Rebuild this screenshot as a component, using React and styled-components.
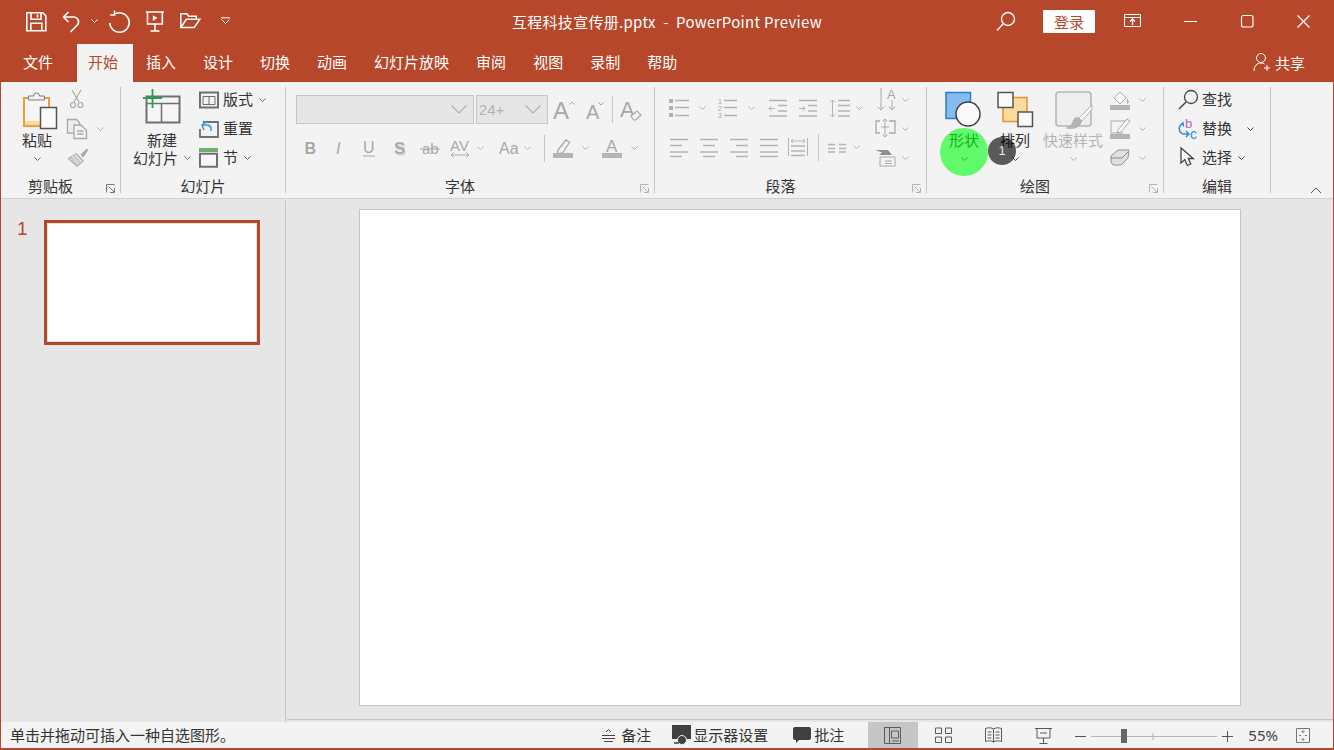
import React from "react";
import styled, { createGlobalStyle } from "styled-components";

const RED = "#b7472a";
const GRAY = "#a9a9a9";
const DARK = "#6b6b6b";
const SANS = `"Liberation Sans", Arial, sans-serif`;
const CJK = `"Noto Sans CJK SC", "Liberation Sans", sans-serif`;

const Global = createGlobalStyle`
  html, body { margin: 0; padding: 0; background: #e6e6e6; }
  body { font-family: ${CJK}; font-size: 15px; overflow: hidden; }
  * { box-sizing: border-box; }
`;

const Window = styled.div`
  width: 1334px; height: 750px; display: flex; flex-direction: column;
  border-left: 1px solid ${RED}; border-right: 1px solid ${RED}; border-bottom: 2px solid ${RED};
  overflow: hidden;
`;
const TitleBar = styled.header`
  height: 42px; flex: none; background: ${RED}; display: grid; grid-template-columns: 1fr auto 1fr; align-items: center; color: #fff;
`;
const TitleLeft = styled.div`display: flex; align-items: center;`;
const TitleRight = styled.div`display: flex; align-items: center; justify-content: flex-end;`;
const TitleText = styled.div`font-size: 15px; line-height: 20px; white-space: pre; color: #fff; letter-spacing: .3px; padding-top: 2px;`;
const Login = styled.button`
  width: 52px; height: 23px; margin-left: 27px; border: 0; padding: 0; background: #fff; color: ${RED};
  font: 15px/23px ${CJK}; border-radius: 1px;
`;
const TabBar = styled.nav`height: 40px; flex: none; background: ${RED}; display: flex; align-items: flex-end;`;
const Tab = styled.div`
  height: 38px; line-height: 35px; white-space: nowrap; font-size: 15px;
  padding: ${(p) => p.$pad || "0 13.5px"};
  background: ${(p) => (p.$active ? "#f3f3f3" : "transparent")};
  color: ${(p) => (p.$active ? RED : "#fff")};
`;
const Share = styled.div`margin-left: auto; margin-right: 28px; display: flex; align-items: center; gap: 4px; height: 38px; padding-bottom: 2px; color: #fff;`;

const Ribbon = styled.section`
  height: 117px; flex: none; background: #f3f3f3; border-bottom: 1px solid #d2d2d2; display: flex; position: relative;
`;
const Group = styled.div`
  width: ${(p) => p.$w}px; flex: none; display: flex; flex-direction: column; position: relative; padding-top: 3px;
`;
const GroupBody = styled.div`height: 91px; display: flex; align-items: flex-start;`;
const GroupFooter = styled.div`height: 20px; display: flex; align-items: center;`;
const GroupLabel = styled.div`flex: 1; text-align: center; font-size: 15px; line-height: 20px; color: #333;`;
const Launcher = styled.div`width: 20px; display: flex; justify-content: center; align-items: center; padding-top: 4px;`;
const Divider = styled.div`width: 1px; height: 106px; margin-top: 5px; background: #c6c6c6; flex: none;`;
const Collapse = styled.div`position: absolute; right: 11px; bottom: 4px; line-height: 0;`;

const Cell = styled.span`display: flex; flex: none; align-items: center; margin-left: ${(p) => p.$l || 0}px;`;
const TextCell = styled(Cell)`padding-bottom: 2px;`;
const Large = styled.div`
  width: ${(p) => p.$w}px; margin-left: ${(p) => p.$l}px; flex: none; display: flex; flex-direction: column; align-items: center;
  color: ${(p) => (p.$off ? "#b4b4b4" : "#333")};
`;
const TextLine = styled.div`height: 18px; line-height: 18px; font-size: 15px; display: flex; align-items: center; white-space: nowrap; gap: 6px; padding-bottom: 2px;`;
const ChevLine = styled.div`height: 18px; display: flex; align-items: center;`;
const SmallCol = styled.div`display: flex; flex-direction: column; margin-left: ${(p) => p.$l}px; flex: none;`;
const SmallRow = styled.div`height: 29px; display: flex; align-items: center; font-size: 15px; color: #333; white-space: nowrap;`;
const Stack = styled.div`display: flex; flex-direction: column; flex: none; width: ${(p) => p.$w}px; padding-top: ${(p) => p.$top}px; gap: ${(p) => p.$gap}px;`;
const ToolRow = styled.div`display: flex; align-items: center; height: ${(p) => p.$h}px;`;
const Combo = styled.div`
  width: ${(p) => p.$w}px; height: 29px; margin-left: ${(p) => p.$l}px; flex: none; background: #e6e6e6; border: 1px solid #c6c6c6;
  display: flex; align-items: center; justify-content: space-between; padding: 0 6px 0 2px; color: #b4b4b4; font: 15px/27px ${SANS};
`;
const Sep = styled.div`width: 1px; height: ${(p) => p.$h}px; margin-left: ${(p) => p.$l}px; background: #c6c6c6; flex: none;`;
const Spot = styled.div`
  position: absolute; left: 13px; top: 46px; width: 48px; height: 48px; border-radius: 50%;
  background: rgba(0, 255, 15, .6);
`;
const Badge = styled.div`
  position: absolute; left: 61px; top: 55px; width: 28px; height: 28px; border-radius: 50%;
  background: rgba(0, 0, 0, .63); color: #e8e8e8; font: 13px/28px ${SANS}; text-align: center;
`;

const Main = styled.main`flex: 1; min-height: 0; display: flex; background: #e6e6e6;`;
const ThumbPane = styled.aside`width: 284px; flex: none; display: flex; align-items: flex-start; padding: 21px 0 0 16px; gap: 18px;`;
const ThumbNum = styled.div`font: 19px/18px ${SANS}; color: ${RED}; width: 9px;`;
const Thumb = styled.div`width: 216px; height: 125px; background: #fff; border: 3px solid ${RED}; box-shadow: inset 0 0 0 1px #e2e2e2;`;
const PaneDivider = styled.div`width: 1px; flex: none; margin-top: 2px; background: #c6c6c6;`;
const EditorCol = styled.div`flex: 1; min-width: 0; display: flex; flex-direction: column;`;
const Editor = styled.div`flex: 1; padding: 10px 0 0 73px;`;
const Slide = styled.div`width: 882px; height: 497px; background: #fff; border: 1px solid #c6c6c6;`;
const HScroll = styled.div`height: 1px; margin-bottom: 2px; margin-left: 1px; background: #c6c6c6;`;

const StatusBar = styled.footer`
  height: 26px; flex: none; background: #f3f3f3; display: flex; align-items: center; font-size: 15px; color: #333; white-space: nowrap;
`;
const StatusMsg = styled.div`padding: 0 0 2px 9px; flex: 1;`;
const StatusItem = styled.div`display: flex; align-items: center; margin-left: ${(p) => p.$l}px; flex: none;`;
const ViewBtn = styled.div`
  width: 50px; height: 26px; flex: none; display: flex; align-items: center; justify-content: center;
  background: ${(p) => (p.$active ? "#c6c6c6" : "transparent")};
`;
const Zoom = styled.div`font: 15px/26px "Noto Sans", ${SANS}; margin-left: ${(p) => p.$l}px; color: #444;`;

const Svg = styled.svg`display: block; flex: none; overflow: visible;`;
const Ico = ({ x, y, w, h, children }) => (
  <Svg width={w} height={h} viewBox={`${x} ${y} ${w} ${h}`} fill="none" strokeWidth="1">
    {children}
  </Svg>
);
const Letter = styled.text`font-family: ${SANS}; fill: ${(p) => p.$c || GRAY}; font-weight: ${(p) => p.$b || 400}; font-style: ${(p) => p.$i || "normal"};`;
const Chev = ({ c = "#8a8a8a" }) => (
  <Svg width="7" height="4" viewBox="0 0 7 4" fill="none"><path d="M.5.5l3 3 3-3" stroke={c} /></Svg>
);
const DimChev = () => <Chev c="#b0b0b0" />;
const LauncherIcon = ({ c = "#b4b4b4" }) => (
  <Svg width="9" height="9" viewBox="0 0 9 9" fill="none" stroke={c}>
    <path d="M.5 8.5V.5h8M2.5 2.5l5.5 5.5M8.5 4v4.5H4" />
  </Svg>
);

/* title bar icons */
const QuickAccess = () => (
  <>
    <Cell $l={25}>
      <Ico x={26} y={10} w={21} h={22}>
        <g stroke="#fff" strokeWidth="1.6">
          <path d="M26.8 12.8h16l3 3v15h-19zM31 12.8v6.5h10v-6.5M30.800 30.800v-7.5h11v7.500" />
          <path d="M37.500 14.500v3" />
        </g>
      </Ico>
    </Cell>
    <Cell $l={15}>
      <Ico x={61} y={10} w={20} h={23}>
        <path d="M67.500 12l-5 5 5 5M63 17h9.500a4.800 4.800 0 0 1 4.200 7.500L69.500 32" stroke="#fff" strokeWidth="1.7" />
      </Ico>
    </Cell>
    <Cell $l={9}><Chev c="#fff" /></Cell>
    <Cell $l={10}>
      <Ico x={107} y={9} w={22} h={23}>
        <path d="M113 13.500a9.700 9.700 0 1 1-4.200 8.500M113.500 9.500v4.500H109" stroke="#fff" strokeWidth="1.6" />
      </Ico>
    </Cell>
    <Cell $l={14}>
      <Ico x={143} y={10} w={21} h={22}>
        <path d="M144.800 12h18M146.500 12v12h14.800V12M154 24v7M149.500 31h9" stroke="#fff" strokeWidth="1.6" />
        <path d="M151.800 15.300l4.600 2.800-4.600 2.800z" fill="#fff" />
      </Ico>
    </Cell>
    <Cell $l={14}>
      <Ico x={178} y={12} w={22} h={18}>
        <path d="M179.800 27.500V13.800h6l2 2.500h7.500v3M179.800 27.500h13.500l5.500-8.200h-13.500z" stroke="#fff" strokeWidth="1.500" />
      </Ico>
    </Cell>
    <Cell $l={19}>
      <Ico x={219} y={17} w={11} h={10}>
        <path d="M220 18.800h9M220.500 20.500l4 4 4-4" stroke="#fff" />
      </Ico>
    </Cell>
  </>
);

const GroupClipboard = () => (
  <Group $w={119}>
    <GroupBody>
      <Large $w={40} $l={16}>
        <Ico x={17} y={85} w={40} h={47}>
          <path d="M24 98h25v28H24z" fill="#fff" stroke="#eb9f3c" strokeWidth="2" />
          <path d="M26 100h21v21H26z" fill="#f6f6f6" />
          <path d="M25 121h17v4H25z" fill="#fbd99b" />
          <path d="M28.500 100v-4h5a3 3 0 0 1 6 0h5v4z" fill="#f3f3f3" stroke="#7a7a7a" />
          <path d="M40.500 107.500h16v21h-16z" fill="#fafafa" stroke="#555" strokeWidth="1.500" />
        </Ico>
        <TextLine>粘贴</TextLine>
        <ChevLine><Chev c="#666" /></ChevLine>
      </Large>
      <SmallCol $l={9}>
        <SmallRow>
          <Ico x={66} y={89} w={22} h={21}>
            <g stroke={GRAY} strokeWidth="1.200">
              <path d="M72 90l7 12M81 90l-7 12" />
              <circle cx="73" cy="105" r="2.500" /><circle cx="80.500" cy="105" r="2.500" />
            </g>
          </Ico>
        </SmallRow>
        <SmallRow>
          <Ico x={66} y={117} w={22} h={22}>
            <g stroke={GRAY} strokeWidth="1.300">
              <path d="M67.500 118.500h9l3 3v4h-3v6.500h-9z" fill="#ededed" />
              <path d="M74 124h7l5.500 5.500v8H74z" fill="#f3f3f3" />
              <path d="M77 130h6.500M77 133h6.500" />
            </g>
          </Ico>
          <Cell $l={9}><DimChev /></Cell>
        </SmallRow>
        <SmallRow>
          <Ico x={66} y={146} w={22} h={21}>
            <path d="M87 148l-6 5.500 2 2.500 4.500-6.500z" fill={GRAY} stroke={GRAY} />
            <path d="M68 157.500l8.500-5 7 7.500-6.500 5.500z" fill="#c9c9c9" stroke={GRAY} />
            <path d="M72 155l6.500 8M75 153.500l6.500 7.500" stroke="#f3f3f3" />
          </Ico>
        </SmallRow>
      </SmallCol>
    </GroupBody>
    <GroupFooter><GroupLabel>剪贴板</GroupLabel><Launcher><LauncherIcon c="#777" /></Launcher></GroupFooter>
  </Group>
);

const GroupSlides = () => (
  <Group $w={164}>
    <GroupBody>
      <Large $w={64} $l={9}>
        <Ico x={130} y={85} w={64} h={47}>
          <path d="M146.500 96.500h33v26h-33z" fill="#f6f6f6" stroke="#707070" strokeWidth="2" />
          <path d="M147 103.500h32M161.500 103.500v19" stroke="#707070" strokeWidth="1.500" />
          <path d="M143 98h19M152.500 89v19" stroke="#22a04f" strokeWidth="1.800" />
        </Ico>
        <TextLine>新建</TextLine>
        <TextLine>幻灯片<Chev c="#666" /></TextLine>
      </Large>
      <SmallCol $l={5}>
        <SmallRow>
          <Ico x={199} y={90} w={20} h={18}>
            <path d="M200 91.500h18v15h-18z" stroke="#707070" strokeWidth="2" />
            <path d="M203 95.500h12M203 95.500v8h12v-8M209 96v7" stroke="#707070" />
          </Ico>
          <TextCell $l={4}>版式</TextCell><Cell $l={6}><Chev c="#666" /></Cell>
        </SmallRow>
        <SmallRow>
          <Ico x={199} y={118} w={20} h={18}>
            <path d="M203 120h15v15h-18v-8" stroke="#707070" strokeWidth="1.800" />
            <path d="M208 119l-6 4 2 5M203 123h5a3.500 3.500 0 0 1 3 3v3" stroke="#2e9be0" strokeWidth="1.500" />
          </Ico>
          <TextCell $l={4}>重置</TextCell>
        </SmallRow>
        <SmallRow>
          <Ico x={199} y={147} w={20} h={20}>
            <path d="M199 147h19v4h-19z" fill="#70ad6f" />
            <path d="M200 152.800h17v13h-17z" fill="#f6f6f6" stroke="#707070" strokeWidth="2" />
          </Ico>
          <TextCell $l={4}>节</TextCell><Cell $l={6}><Chev c="#666" /></Cell>
        </SmallRow>
      </SmallCol>
    </GroupBody>
    <GroupFooter><GroupLabel>幻灯片</GroupLabel></GroupFooter>
  </Group>
);

const BigChev = () => (
  <Svg width="16" height="9" viewBox="0 0 16 9" fill="none"><path d="M.5.500l7.500 7.500L15.500.500" stroke="#b0b0b0" strokeWidth="1.200" /></Svg>
);

const GroupFont = () => (
  <Group $w={368}>
    <GroupBody>
      <Stack $w={368} $top={10} $gap={13}>
        <ToolRow $h={29}>
          <Combo $w={178} $l={10}><span /><BigChev /></Combo>
          <Combo $w={72} $l={2}><span>24+</span><BigChev /></Combo>
          <Cell $l={6}>
            <Ico x={554} y={96} w={22} h={24}>
              <Letter x="553" y="117" fontSize="24">A</Letter>
              <path d="M569.500 102.500l2.500-2.500 2.500 2.500" stroke={GRAY} />
            </Ico>
          </Cell>
          <Cell $l={10}>
            <Ico x={586} y={96} w={20} h={24}>
              <Letter x="586" y="117" fontSize="20">A</Letter>
              <path d="M598.500 100.500l2.500 2.500 2.500-2.500" stroke={GRAY} />
            </Ico>
          </Cell>
          <Sep $l={6} $h={27} />
          <Cell $l={8}>
            <Ico x={621} y={96} w={22} h={24}>
              <Letter x="620" y="115" fontSize="22">A</Letter>
              <path d="M631 114l6-5 4 4-5.500 5h-2z" fill="#f3f3f3" stroke={GRAY} strokeWidth="1.200" />
            </Ico>
          </Cell>
        </ToolRow>
        <ToolRow $h={22}>
          <Cell $l={19}><Ico x={305} y={137} w={11} h={22}><Letter x="304.500" y="154" fontSize="16" $b={700}>B</Letter></Ico></Cell>
          <Cell $l={19}><Ico x={335} y={137} w={10} h={22}><Letter x="336" y="154" fontSize="16" $i="italic">I</Letter></Ico></Cell>
          <Cell $l={18}><Ico x={363} y={137} w={12} h={22}><Letter x="363" y="153" fontSize="16">U</Letter><path d="M363 156h12" stroke={GRAY} /></Ico></Cell>
          <Cell $l={19}>
            <Ico x={394} y={137} w={11} h={22}>
              <Letter x="395" y="155.500" fontSize="17" $b={700} $c="#dcdcdc">S</Letter>
              <Letter x="394" y="154" fontSize="17" $b={700}>S</Letter>
            </Ico>
          </Cell>
          <Cell $l={15}><Ico x={420} y={137} w={21} h={22}><Letter x="422" y="154" fontSize="15">ab</Letter><path d="M420 149h20" stroke={GRAY} /></Ico></Cell>
          <Cell $l={9}>
            <Ico x={450} y={137} w={21} h={22}>
              <Letter x="450" y="151" fontSize="15">AV</Letter>
              <path d="M451 155h18M453.500 152.500l-2.500 2.500 2.500 2.500M466.500 152.500l2.500 2.500-2.500 2.500" stroke={GRAY} />
            </Ico>
          </Cell>
          <Cell $l={6}><DimChev /></Cell>
          <Cell $l={15}><Ico x={499} y={137} w={21} h={22}><Letter x="499" y="154" fontSize="16">Aa</Letter></Ico></Cell>
          <Cell $l={4}><DimChev /></Cell>
          <Sep $l={13} $h={27} />
          <Cell $l={8}>
            <Ico x={553} y={137} w={20} h={22}>
              <path d="M558 150l8-10 3.500 2.500-7 10.500-5 1z" stroke={GRAY} strokeWidth="1.300" />
              <path d="M553 153h20v5h-20z" fill="#b4b4b4" />
            </Ico>
          </Cell>
          <Cell $l={9}><DimChev /></Cell>
          <Cell $l={13}>
            <Ico x={602} y={137} w={20} h={22}>
              <Letter x="606" y="152" fontSize="17">A</Letter>
              <path d="M602 153h20v5h-20z" fill="#b4b4b4" />
            </Ico>
          </Cell>
          <Cell $l={9}><DimChev /></Cell>
        </ToolRow>
      </Stack>
    </GroupBody>
    <GroupFooter><GroupLabel>字体</GroupLabel><Launcher><LauncherIcon /></Launcher></GroupFooter>
  </Group>
);

const Lines = ({ x, w, ys }) => <path d={ys.map((y) => `M${x} ${y}h${w}`).join("")} stroke="#b4b4b4" strokeWidth="1.500" />;

const GroupPara = () => (
  <Group $w={271}>
    <GroupBody>
      <Stack $w={220} $top={13} $gap={19}>
        <ToolRow $h={20}>
          <Cell $l={14}>
            <Ico x={669} y={98} w={20} h={20}>
              <path d="M669 99h4v4h-4zM669 106h4v4h-4zM669 113h4v4h-4z" fill="#b0b0b0" />
              <Lines x={675} w={14} ys={[100.500, 107.500, 115.500]} />
            </Ico>
          </Cell>
          <Cell $l={10}><DimChev /></Cell>
          <Cell $l={11}>
            <Ico x={717} y={98} w={20} h={20}>
              <Letter x="718" y="104" fontSize="7">1</Letter><Letter x="718" y="111" fontSize="7">2</Letter><Letter x="718" y="118" fontSize="7">3</Letter>
              <Lines x={724} w={13} ys={[100.500, 107.500, 115.500]} />
            </Ico>
          </Cell>
          <Cell $l={11}><DimChev /></Cell>
          <Cell $l={13}>
            <Ico x={768} y={98} w={19} h={20}>
              <Lines x={769} w={18} ys={[100.500, 116]} /><Lines x={778} w={9} ys={[105.500, 111]} />
              <path d="M775 108.500h-6M771.500 106l-2.500 2.500 2.500 2.500" stroke="#b4b4b4" />
            </Ico>
          </Cell>
          <Cell $l={11}>
            <Ico x={798} y={98} w={19} h={20}>
              <Lines x={799} w={18} ys={[100.500, 116]} /><Lines x={808} w={9} ys={[105.500, 111]} />
              <path d="M799 108.500h6M802.500 106l2.500 2.500-2.500 2.500" stroke="#b4b4b4" />
            </Ico>
          </Cell>
          <Cell $l={12}>
            <Ico x={829} y={98} w={21} h={20}>
              <Lines x={838} w={12} ys={[100.500, 105.500, 111, 116]} />
              <path d="M832.500 100v17M830 102.500l2.500-2.500 2.500 2.500M830 114.500l2.500 2.500 2.500-2.500" stroke="#b4b4b4" />
            </Ico>
          </Cell>
          <Cell $l={6}><DimChev /></Cell>
        </ToolRow>
        <ToolRow $h={20}>
          <Cell $l={15}><Ico x={670} y={137} w={18} h={20}><Lines x={670} w={18} ys={[139.500, 152]} /><Lines x={670} w={12} ys={[145.500, 156.500]} /></Ico></Cell>
          <Cell $l={12}><Ico x={700} y={137} w={18} h={20}><Lines x={700} w={18} ys={[139.500, 152]} /><Lines x={703} w={12} ys={[145.500, 156.500]} /></Ico></Cell>
          <Cell $l={12}><Ico x={730} y={137} w={18} h={20}><Lines x={730} w={18} ys={[139.500, 152]} /><Lines x={736} w={12} ys={[145.500, 156.500]} /></Ico></Cell>
          <Cell $l={12}><Ico x={760} y={137} w={18} h={20}><Lines x={760} w={18} ys={[139.500, 145.500, 152, 156.500]} /></Ico></Cell>
          <Cell $l={10}>
            <Ico x={788} y={137} w={20} h={20}>
              <path d="M788.500 138v18M807.500 138v18M791 141h14M793 139l-2 2 2 2M803 139l2 2-2 2" stroke="#b4b4b4" />
              <Lines x={791} w={14} ys={[146, 151, 155.500]} />
            </Ico>
          </Cell>
          <Sep $l={10} $h={27} />
          <Cell $l={9}><Ico x={828} y={137} w={18} h={20}><Lines x={828} w={7} ys={[144.500, 148.500, 152]} /><Lines x={839} w={7} ys={[144.500, 148.500, 152]} /></Ico></Cell>
          <Cell $l={7}><DimChev /></Cell>
        </ToolRow>
      </Stack>
      <SmallCol $l={0}>
        <SmallRow>
          <Ico x={875} y={87} w={24} h={24}>
            <Letter x="887" y="98" fontSize="13">A</Letter>
            <path d="M881 87v22M877.500 105.500l3.500 3.500 3.500-3.500M892 99v10M889 105.500l3 3.500 3-3.500" stroke={GRAY} />
          </Ico>
          <Cell $l={3}><DimChev /></Cell>
        </SmallRow>
        <SmallRow>
          <Ico x={875} y={117} w={22} h={22}>
            <path d="M880 120h-4v12h4M889 120h6v12h-6" stroke={GRAY} strokeWidth="1.300" />
            <path d="M885 118v18M882.500 120.500l2.500-2.500 2.500 2.500M882.500 133.500l2.500 2.500 2.500-2.500M881 126h8" stroke={GRAY} />
          </Ico>
          <Cell $l={5}><DimChev /></Cell>
        </SmallRow>
        <SmallRow>
          <Ico x={875} y={147} w={22} h={20}>
            <path d="M875 149h13l4 5h-13l3-2.500z" fill="#8f8f8f" />
            <path d="M880 156h15v9h-15z" fill="#f3f3f3" stroke={GRAY} />
            <path d="M885 160h7M885 162.500h7" stroke={GRAY} />
          </Ico>
          <Cell $l={5}><DimChev /></Cell>
        </SmallRow>
      </SmallCol>
    </GroupBody>
    <GroupFooter><GroupLabel>段落</GroupLabel><Launcher><LauncherIcon /></Launcher></GroupFooter>
  </Group>
);

const GroupDraw = () => (
  <Group $w={236}>
    <GroupBody>
      <Large $w={40} $l={17}>
        <Ico x={944} y={85} w={40} h={47}>
          <path d="M946 92.500h24.500v26H946z" fill="#84bcee" stroke="#2b7cd3" strokeWidth="1.500" />
          <circle cx="968" cy="114" r="12" fill="#fafafa" stroke="#404040" strokeWidth="1.500" />
        </Ico>
        <TextLine>形状</TextLine>
        <ChevLine><Chev c="#444" /></ChevLine>
      </Large>
      <Large $w={40} $l={11}>
        <Ico x={995} y={85} w={40} h={47}>
          <path d="M1003 97.500h24v24h-24z" fill="#fbdc9c" stroke="#e88f2e" strokeWidth="1.500" />
          <path d="M998 92.500h15v15h-15z" fill="#fafafa" stroke="#555" strokeWidth="1.500" />
          <path d="M1018 112h14.500v14.500H1018z" fill="#fafafa" stroke="#555" strokeWidth="1.500" />
        </Ico>
        <TextLine>排列</TextLine>
        <ChevLine><Chev c="#444" /></ChevLine>
      </Large>
      <Large $w={64} $l={6} $off>
        <Ico x={1041} y={85} w={64} h={47}>
          <rect x="1056" y="92" width="35" height="34" rx="3" fill="#eeeeee" stroke="#b4b4b4" strokeWidth="1.500" />
          <path d="M1092 105l-13 13 3 3 10-12z" fill="#fafafa" stroke="#b4b4b4" />
          <path d="M1078 117c-4 0-5 3-6 6-1 3-4 4-7 5 7 2 15 1 17-7z" fill="#b4b4b4" />
        </Ico>
        <TextLine>快速样式</TextLine>
        <ChevLine><DimChev /></ChevLine>
      </Large>
      <SmallCol $l={5}>
        <SmallRow>
          <Ico x={1110} y={88} w={20} h={22}>
            <path d="M1114 97l6-6 6 6-6 6z" fill="#fafafa" stroke={GRAY} />
            <path d="M1127 97l2 4-2 2z" fill={GRAY} />
            <path d="M1110 104h20v5h-20z" fill="#b4b4b4" />
          </Ico>
          <Cell $l={9}><DimChev /></Cell>
        </SmallRow>
        <SmallRow>
          <Ico x={1110} y={117} w={20} h={22}>
            <path d="M1127 120h-16v12h12" stroke={GRAY} />
            <path d="M1118 129l9-11 3 2-9 11-4 1z" fill="#fafafa" stroke={GRAY} />
            <path d="M1110 133h20v5h-20z" fill="#b4b4b4" />
          </Ico>
          <Cell $l={9}><DimChev /></Cell>
        </SmallRow>
        <SmallRow>
          <Ico x={1110} y={148} w={20} h={18}>
            <path d="M1111 155l7-6h11l-1 8-7 7h-8l-2-3z" fill="#d8d8d8" stroke={DARK} opacity=".7" />
            <path d="M1111 157h11l6-6" stroke={DARK} opacity=".7" />
          </Ico>
          <Cell $l={9}><DimChev /></Cell>
        </SmallRow>
      </SmallCol>
    </GroupBody>
    <GroupFooter><GroupLabel>绘图</GroupLabel><Launcher><LauncherIcon /></Launcher></GroupFooter>
    <Spot />
    <Badge>1</Badge>
  </Group>
);

const GroupEdit = () => (
  <Group $w={106}>
    <GroupBody>
      <SmallCol $l={14}>
        <SmallRow>
          <Ico x={1178} y={88} w={20} h={22}>
            <circle cx="1191" cy="96" r="6.500" stroke="#444" strokeWidth="1.300" />
            <path d="M1186 101l-7 7" stroke="#444" strokeWidth="1.500" />
          </Ico>
          <TextCell $l={4}>查找</TextCell>
        </SmallRow>
        <SmallRow>
          <Ico x={1178} y={117} w={20} h={23}>
            <Letter x="1185" y="128" fontSize="13" $c="#b45fc0">b</Letter>
            <Letter x="1190" y="139" fontSize="14" $c="#2e8fe0">c</Letter>
            <path d="M1183 124c-5 1-5 8 0 10h6M1186 131l3 3-3 3M1180 125.500l3-2.500.5 3.500" stroke="#2e8fe0" strokeWidth="1.500" />
          </Ico>
          <TextCell $l={4}>替换</TextCell><Cell $l={15}><Chev c="#444" /></Cell>
        </SmallRow>
        <SmallRow>
          <Ico x={1178} y={147} w={20} h={21}>
            <path d="M1181 148v15l3.800-3.500 2.500 6 3.500-1.500-2.500-5.500h5z" fill="#fafafa" stroke="#444" strokeWidth="1.300" />
          </Ico>
          <TextCell $l={4}>选择</TextCell><Cell $l={6}><Chev c="#444" /></Cell>
        </SmallRow>
      </SmallCol>
    </GroupBody>
    <GroupFooter><GroupLabel>编辑</GroupLabel></GroupFooter>
  </Group>
);

const tabs = ["插入", "设计", "切换", "动画", "幻灯片放映", "审阅", "视图", "录制", "帮助"];

export default function App() {
  return (
    <>
      <Global />
      <Window>
        <TitleBar>
          <TitleLeft><QuickAccess /></TitleLeft>
          <TitleText>互程科技宣传册.pptx  -  PowerPoint Preview</TitleText>
          <TitleRight>
            <Ico x={998} y={11} w={20} h={21}>
              <circle cx="1010" cy="19" r="6.500" stroke="#fff" strokeWidth="1.400" />
              <path d="M1005 24l-6 6.500" stroke="#fff" strokeWidth="1.400" />
            </Ico>
            <Login>登录</Login>
            <Cell $l={29}>
              <Ico x={1124} y={13} w={17} h={14}>
                <path d="M1124.500 13.500h16v12h-16zM1124.500 16.500h16" stroke="#fff" />
                <path d="M1132.500 24v-6M1130 20.500l2.500-2.500 2.500 2.500" stroke="#fff" strokeWidth="1.300" />
              </Ico>
            </Cell>
            <Cell $l={43}><Ico x={1184} y={15} w={13} h={10}><path d="M1184 20.500h13" stroke="#fff" /></Ico></Cell>
            <Cell $l={44}><Ico x={1241} y={14} w={13} h={13}><rect x="1241.500" y="14.500" width="11.500" height="11.500" rx="2" stroke="#fff" strokeWidth="1.200" /></Ico></Cell>
            <Cell $l={43}><Ico x={1297} y={14} w={13} h={13}><path d="M1297.500 14.500l12 12M1309.500 14.500l-12 12" stroke="#fff" strokeWidth="1.200" /></Ico></Cell>
            <Cell $l={23} />
          </TitleRight>
        </TitleBar>
        <TabBar>
          <Tab $pad="0 24px 0 22px">文件</Tab>
          <Tab $active $pad="0 14.5px 0 11px">开始</Tab>
          {tabs.map((t) => <Tab key={t}>{t}</Tab>)}
          <Share>
            <Ico x={1253} y={54} w={18} h={20}>
              <circle cx="1261" cy="60" r="4.500" stroke="#fff" />
              <path d="M1254 73c0-5 3-8 7-8 1.500 0 2.500.3 3.500 1M1267 67v6M1264 70h6" stroke="#fff" />
            </Ico>
            <span>共享</span>
          </Share>
        </TabBar>
        <Ribbon>
          <GroupClipboard /><Divider />
          <GroupSlides /><Divider />
          <GroupFont /><Divider />
          <GroupPara /><Divider />
          <GroupDraw /><Divider />
          <GroupEdit /><Divider />
          <Collapse><Svg width="12" height="7" viewBox="0 0 12 7" fill="none"><path d="M1 6l5-5 5 5" stroke="#555" /></Svg></Collapse>
        </Ribbon>
        <Main>
          <ThumbPane>
            <ThumbNum>1</ThumbNum>
            <Thumb />
          </ThumbPane>
          <PaneDivider />
          <EditorCol>
            <Editor><Slide /></Editor>
            <HScroll />
          </EditorCol>
        </Main>
        <StatusBar>
          <StatusMsg>单击并拖动可插入一种自选图形。</StatusMsg>
          <StatusItem $l={0}>
            <Ico x={602} y={728} w={14} h={14}>
              <path d="M606 732l2.500-2.500 2.500 2.500" stroke="#444" />
              <path d="M602 735.500h13M602 738.500h13M604 741.500h9" stroke="#444" />
            </Ico>
            <TextCell $l={5}>备注</TextCell>
          </StatusItem>
          <StatusItem $l={21}>
            <Ico x={672} y={726} w={21} h={22}>
              <path d="M672 727h19v14h-19z" fill="#404040" />
              <circle cx="682" cy="742" r="4.500" fill="#404040" stroke="#f3f3f3" />
              <path d="M674 745h5" stroke="#404040" strokeWidth="1.500" />
            </Ico>
            <TextCell>显示器设置</TextCell>
          </StatusItem>
          <StatusItem $l={25}>
            <Ico x={793} y={727} w={19} h={18}>
              <path d="M795 728h14a2 2 0 0 1 2 2v9a2 2 0 0 1-2 2h-10l-3 3v-3h-1a2 2 0 0 1-2-2v-9a2 2 0 0 1 2-2z" fill="#404040" />
            </Ico>
            <TextCell $l={2}>批注</TextCell>
          </StatusItem>
          <StatusItem $l={24}>
            <ViewBtn $active>
              <Ico x={884} y={726} w={18} h={18}>
                <path d="M884.500 727.500h5v16h-5zM889.500 727.500h11v16h-11zM891.500 731h7v7h-7zM892 741h7" stroke="#5a5a5a" />
              </Ico>
            </ViewBtn>
            <ViewBtn>
              <Ico x={934} y={727} w={17} h={16}>
                <path d="M934.500 728h6v5.500h-6zM944.500 728h6v5.500h-6zM934.500 737h6v5.500h-6zM944.500 737h6v5.500h-6z" stroke="#5a5a5a" />
              </Ico>
            </ViewBtn>
            <ViewBtn>
              <Ico x={984} y={727} w={17} h={16}>
                <path d="M984.500 728.500c3-1 6-1 8 .5 2-1.500 5-1.500 8-.5v13c-3-1-6-1-8 .5-2-1.500-5-1.500-8-.5zM992.500 729v13M986.500 732h4M986.500 735h4M986.500 738h4M994.500 732h4M994.500 735h4M994.500 738h4" stroke="#5a5a5a" />
              </Ico>
            </ViewBtn>
            <ViewBtn>
              <Ico x={1034} y={727} w={17} h={17}>
                <path d="M1034 728.500h17M1036 729v9h13v-9M1042.500 738v5M1038.500 743.500h8M1039 733h7" stroke="#5a5a5a" />
              </Ico>
            </ViewBtn>
          </StatusItem>
          <StatusItem $l={6}>
            <Ico x={1074} y={726} w={160} h={18}>
              <path d="M1075 736.500h11" stroke="#555" />
              <path d="M1091 736.500h126" stroke="#b5b5b5" />
              <path d="M1153 733v7" stroke="#b5b5b5" />
              <path d="M1121 729h6v14h-6z" fill="#666" />
              <path d="M1222 736.500h11M1227.500 731v11" stroke="#555" />
            </Ico>
          </StatusItem>
          <Zoom $l={14}>55%</Zoom>
          <StatusItem $l={18}>
            <Ico x={1296} y={728} w={14} h={15}>
              <path d="M1296.500 728.500h13v14h-13z" stroke="#777" />
              <path d="M1303 731v2M1301.500 732l1.500-1.500 1.500 1.500M1303 740v-2M1301.500 739l1.500 1.500 1.500-1.500M1299 735.500h2M1305 735.500h2" stroke="#777" />
            </Ico>
          </StatusItem>
          <Cell $l={23} />
        </StatusBar>
      </Window>
    </>
  );
}
